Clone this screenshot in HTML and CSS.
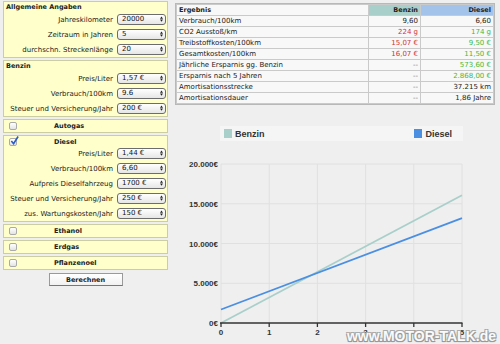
FILE: index.html
```html
<!DOCTYPE html>
<html lang="de">
<head>
    <meta charset="UTF-8">
    <meta name="viewport" content="width=device-width, initial-scale=1.0">
    <title>Spritkostenrechner - Benzin vs. Diesel</title>
    <link rel="stylesheet" href="styles.css">
</head>
<body>
    <div class="page">
        <form class="inputs" onsubmit="return false;">
            <div class="box">
                <div class="box-title">Allgemeine Angaben</div>
                <div class="row">
                    <label>Jahreskilometer</label>
                    <span class="sel"><select><option>20000</option></select><svg class="arrows" viewBox="0 0 4 7"><path d="M0 3L2 0L4 3Z M0 4L2 7L4 4Z"/></svg></span>
                </div>
                <div class="row">
                    <label>Zeitraum in Jahren</label>
                    <span class="sel"><select><option>5</option></select><svg class="arrows" viewBox="0 0 4 7"><path d="M0 3L2 0L4 3Z M0 4L2 7L4 4Z"/></svg></span>
                </div>
                <div class="row">
                    <label>durchschn. Streckenlänge</label>
                    <span class="sel"><select><option>20</option></select><svg class="arrows" viewBox="0 0 4 7"><path d="M0 3L2 0L4 3Z M0 4L2 7L4 4Z"/></svg></span>
                </div>
            </div>

            <div class="box">
                <div class="box-title">Benzin</div>
                <div class="row">
                    <label>Preis/Liter</label>
                    <span class="sel"><select><option>1,57 €</option></select><svg class="arrows" viewBox="0 0 4 7"><path d="M0 3L2 0L4 3Z M0 4L2 7L4 4Z"/></svg></span>
                </div>
                <div class="row">
                    <label>Verbrauch/100km</label>
                    <span class="sel"><select><option>9.6</option></select><svg class="arrows" viewBox="0 0 4 7"><path d="M0 3L2 0L4 3Z M0 4L2 7L4 4Z"/></svg></span>
                </div>
                <div class="row">
                    <label>Steuer und Versicherung/Jahr</label>
                    <span class="sel"><select><option>200 €</option></select><svg class="arrows" viewBox="0 0 4 7"><path d="M0 3L2 0L4 3Z M0 4L2 7L4 4Z"/></svg></span>
                </div>
            </div>

            <div class="box">
                <div class="toggle"><span class="check"></span><span class="toggle-label">Autogas</span></div>
            </div>

            <div class="box">
                <div class="toggle">
                    <span class="check checked"><svg viewBox="0 0 10 10"><path d="M1.5 5.5L4 8.5L9 0.5" fill="none" stroke="#2b5cc4" stroke-width="1.8"/></svg></span>
                    <span class="toggle-label">Diesel</span>
                </div>
                <div class="row">
                    <label>Preis/Liter</label>
                    <span class="sel"><select><option>1,44 €</option></select><svg class="arrows" viewBox="0 0 4 7"><path d="M0 3L2 0L4 3Z M0 4L2 7L4 4Z"/></svg></span>
                </div>
                <div class="row">
                    <label>Verbrauch/100km</label>
                    <span class="sel"><select><option>6,60</option></select><svg class="arrows" viewBox="0 0 4 7"><path d="M0 3L2 0L4 3Z M0 4L2 7L4 4Z"/></svg></span>
                </div>
                <div class="row">
                    <label>Aufpreis Dieselfahrzeug</label>
                    <span class="sel"><select><option>1700 €</option></select><svg class="arrows" viewBox="0 0 4 7"><path d="M0 3L2 0L4 3Z M0 4L2 7L4 4Z"/></svg></span>
                </div>
                <div class="row">
                    <label>Steuer und Versicherung/Jahr</label>
                    <span class="sel"><select><option>250 €</option></select><svg class="arrows" viewBox="0 0 4 7"><path d="M0 3L2 0L4 3Z M0 4L2 7L4 4Z"/></svg></span>
                </div>
                <div class="row">
                    <label>zus. Wartungskosten/Jahr</label>
                    <span class="sel"><select><option>150 €</option></select><svg class="arrows" viewBox="0 0 4 7"><path d="M0 3L2 0L4 3Z M0 4L2 7L4 4Z"/></svg></span>
                </div>
            </div>

            <div class="box">
                <div class="toggle"><span class="check"></span><span class="toggle-label">Ethanol</span></div>
            </div>
            <div class="box">
                <div class="toggle"><span class="check"></span><span class="toggle-label">Erdgas</span></div>
            </div>
            <div class="box">
                <div class="toggle"><span class="check"></span><span class="toggle-label">Pflanzenoel</span></div>
            </div>

            <button class="btn" type="submit">Berechnen</button>
        </form>

        <div class="results">
            <table class="result-table">
                <tr>
                    <th class="c-name">Ergebnis</th>
                    <th class="c-benzin">Benzin</th>
                    <th class="c-diesel">Diesel</th>
                </tr>
                <tr><td>Verbrauch/100km</td><td class="num">9,60</td><td class="num">6,60</td></tr>
                <tr><td>CO2 Ausstoß/km</td><td class="num red">224 g</td><td class="num green">174 g</td></tr>
                <tr><td>Treibstoffkosten/100km</td><td class="num red">15,07 €</td><td class="num green">9,50 €</td></tr>
                <tr><td>Gesamtkosten/100km</td><td class="num red">16,07 €</td><td class="num green">11,50 €</td></tr>
                <tr><td>Jährliche Ersparnis gg. Benzin</td><td class="num dash">--</td><td class="num green">573,60 €</td></tr>
                <tr><td>Ersparnis nach 5 Jahren</td><td class="num dash">--</td><td class="num green">2.868,00 €</td></tr>
                <tr><td>Amortisationsstrecke</td><td class="num dash">--</td><td class="num">37.215 km</td></tr>
                <tr><td>Amortisationsdauer</td><td class="num dash">--</td><td class="num">1,86 Jahre</td></tr>
            </table>

            <div class="legend">
                <span class="legend-item"><span class="swatch benzin"></span>Benzin</span>
                <span class="legend-item"><span class="swatch diesel"></span>Diesel</span>
            </div>

            <svg class="chart" width="320" height="194" viewBox="0 0 320 194">
                <g class="grid">
                    <line x1="46" y1="13" x2="287" y2="13"/>
                    <line x1="46" y1="52.75" x2="287" y2="52.75"/>
                    <line x1="46" y1="92.5" x2="287" y2="92.5"/>
                    <line x1="46" y1="132.25" x2="287" y2="132.25"/>
                    <line x1="46" y1="13" x2="46" y2="172"/>
                    <line x1="94.2" y1="13" x2="94.2" y2="172"/>
                    <line x1="142.4" y1="13" x2="142.4" y2="172"/>
                    <line x1="190.6" y1="13" x2="190.6" y2="172"/>
                    <line x1="238.8" y1="13" x2="238.8" y2="172"/>
                    <line x1="287" y1="13" x2="287" y2="172"/>
                </g>
                <g class="y-labels">
                    <text x="43" y="16">20.000€</text>
                    <text x="43" y="55.8">15.000€</text>
                    <text x="43" y="95.5">10.000€</text>
                    <text x="43" y="135.2">5.000€</text>
                    <text x="43" y="175">0€</text>
                </g>
                <polyline class="line-benzin" points="46,172 287,44.2"/>
                <polyline class="line-diesel" points="46,158.5 287,67.1"/>
                <g class="axis">
                    <line x1="45" y1="172" x2="287.5" y2="172"/>
                    <line x1="46" y1="172" x2="46" y2="176"/>
                    <line x1="94.2" y1="172" x2="94.2" y2="176"/>
                    <line x1="142.4" y1="172" x2="142.4" y2="176"/>
                    <line x1="190.6" y1="172" x2="190.6" y2="176"/>
                    <line x1="238.8" y1="172" x2="238.8" y2="176"/>
                    <line x1="287" y1="172" x2="287" y2="176"/>
                </g>
                <g class="x-labels">
                    <text x="46" y="184">0</text>
                    <text x="94.2" y="184">1</text>
                    <text x="142.4" y="184">2</text>
                    <text x="190.6" y="184">3</text>
                    <text x="238.8" y="184">4</text>
                    <text x="287" y="184">5</text>
                </g>
            </svg>
        </div>

        <div class="watermark">www.MOTOR-TALK.de</div>
    </div>
</body>
</html>
```

FILE: styles.css
```css
:root {
    --box-bg: #ffffcc;
    --box-border: #cdcda4;
    --benzin: #a9cfca;
    --diesel: #4a8fe2;
    --text-dark: #222;
    --red: #d03535;
    --green: #3fb83f;
}

* {
    box-sizing: border-box;
    margin: 0;
    padding: 0;
}

body {
    font-family: 'DejaVu Sans', Verdana, sans-serif;
    font-size: 7px;
    color: var(--text-dark);
    background: #efefef;
}

.page {
    position: relative;
    display: flex;
    gap: 7px;
    width: 500px;
    height: 344px;
    padding: 1px 5px 0 3px;
    overflow: hidden;
}

/* left column: form boxes */
.inputs {
    width: 165px;
    display: flex;
    flex-direction: column;
    gap: 2px;
}

.box {
    background: var(--box-bg);
    border: 1px solid var(--box-border);
}

.box-title {
    font-weight: bold;
    font-size: 6.5px;
    line-height: 10px;
    padding-left: 2px;
}

.row {
    display: flex;
    justify-content: flex-end;
    align-items: center;
    gap: 4px;
    height: 15px;
    padding-right: 1px;
}

.sel {
    position: relative;
    width: 49px;
    height: 11px;
}

.sel select {
    appearance: none;
    -webkit-appearance: none;
    width: 100%;
    height: 100%;
    border: 1px solid #6d6d6d;
    border-radius: 3px;
    background: linear-gradient(#ffffff, #e6e6e6);
    font-family: 'DejaVu Sans', Verdana, sans-serif;
    font-size: 7px;
    color: #111;
    padding: 0 0 0 4px;
    line-height: 9px;
}

.sel .arrows {
    position: absolute;
    right: 3px;
    top: 2px;
    width: 3px;
    height: 6px;
    fill: #222;
}

.toggle {
    display: flex;
    align-items: center;
    height: 12px;
    padding-left: 5px;
}

.box .toggle + .row {
    margin-top: -2px;
}

.check {
    width: 8px;
    height: 8px;
    border: 1px solid #aaa;
    border-radius: 2px;
    background: linear-gradient(#fff, #e4e4e4);
    position: relative;
}

.check.checked svg {
    position: absolute;
    left: 0;
    top: -3px;
    width: 9px;
    height: 9px;
}

.toggle-label {
    margin-left: 37px;
    font-weight: bold;
    font-size: 6.5px;
}

.btn {
    align-self: center;
    width: 74px;
    height: 13px;
    margin-top: 1px;
    border: 1px solid #9a9a9a;
    border-bottom-color: #777;
    background: linear-gradient(#ffffff, #f1f1f1);
    font-family: 'DejaVu Sans', Verdana, sans-serif;
    font-size: 6.5px;
    font-weight: bold;
    color: var(--text-dark);
}

/* right column: table + chart */
.results {
    width: 320px;
    padding-top: 2px;
}

.result-table {
    width: 320px;
    border-collapse: separate;
    border-spacing: 1px;
    background: #cacaca;
    border: 1px solid #b8b8b8;
}

.result-table th,
.result-table td {
    background: #f8f8f8;
    height: 10px;
    line-height: 10px;
    padding: 0 2px;
    text-align: left;
    font-weight: normal;
    white-space: nowrap;
}

.result-table th {
    font-weight: bold;
    font-size: 6.5px;
}

.result-table .c-benzin {
    width: 51px;
    background: var(--benzin);
    text-align: right;
}

.result-table .c-diesel {
    width: 72px;
    background: #a3c3ea;
    text-align: right;
}

.result-table .num {
    text-align: right;
}

.red { color: var(--red); }
.green { color: var(--green); }
.dash { color: #777; }

.legend {
    display: flex;
    justify-content: space-between;
    align-items: center;
    width: 243px;
    height: 15px;
    margin: 21px 0 0 45px;
    padding: 0 11px 0 4px;
    background: #f5f5f5;
    font-family: 'Liberation Sans', Arial, sans-serif;
    font-size: 9px;
    font-weight: bold;
    color: #333;
}

.legend-item {
    display: flex;
    align-items: center;
    gap: 3px;
}

.swatch {
    width: 8px;
    height: 9px;
}

.swatch.benzin { background: var(--benzin); }
.swatch.diesel { background: var(--diesel); }

.chart {
    display: block;
    margin-top: 10px;
    font-family: 'Liberation Sans', Arial, sans-serif;
    font-size: 8px;
    font-weight: bold;
}

.chart .grid line {
    stroke: #e0e0e0;
    stroke-width: 1;
}

.chart .y-labels text {
    text-anchor: end;
    fill: #333;
}

.chart .x-labels text {
    text-anchor: middle;
    fill: #333;
}

.chart .axis line {
    stroke: #333;
    stroke-width: 1.3;
}

.line-benzin {
    fill: none;
    stroke: var(--benzin);
    stroke-width: 1.8;
}

.line-diesel {
    fill: none;
    stroke: var(--diesel);
    stroke-width: 1.8;
}

.watermark {
    position: absolute;
    right: 4px;
    bottom: 0;
    font-family: 'Liberation Sans', Arial, sans-serif;
    font-size: 14px;
    font-weight: bold;
    line-height: 15px;
    color: #fafafa;
    text-shadow: 1px 1px 0 #999, -1px -1px 0 #aaa, 1px -1px 0 #aaa, -1px 1px 0 #999, 0 1px 1px #888;
}
```
